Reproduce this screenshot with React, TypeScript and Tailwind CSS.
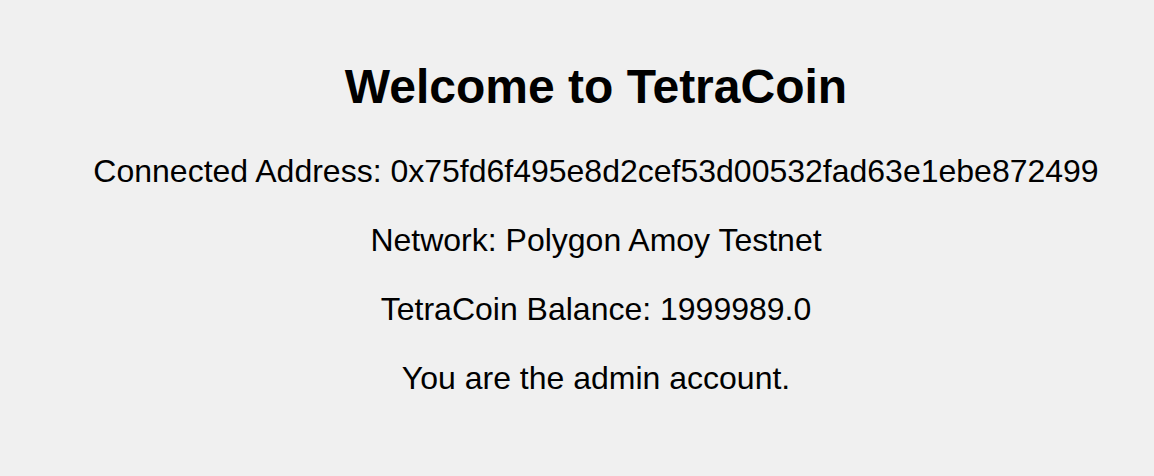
export default function App() {
  const font = { fontFamily: '"Liberation Sans", Arial, Helvetica, sans-serif' };
  return (
    <div
      className="min-h-[476px] w-full bg-[#f0f0f0] text-black pl-[38px] pt-[59px] flex flex-col items-center text-center"
      style={font}
    >
      <h1 className="text-[48px] font-bold leading-[55px]">Welcome to TetraCoin</h1>
      <p className="mt-[39px] text-[32px] leading-[37px]">
        Connected Address: 0x75fd6f495e8d2cef53d00532fad63e1ebe872499
      </p>
      <p className="mt-[32px] text-[32px] leading-[37px]">Network: Polygon Amoy Testnet</p>
      <p className="mt-[32px] text-[32px] leading-[37px]">TetraCoin Balance: 1999989.0</p>
      <p className="mt-[32px] text-[32px] leading-[37px]">You are the admin account.</p>
    </div>
  );
}
